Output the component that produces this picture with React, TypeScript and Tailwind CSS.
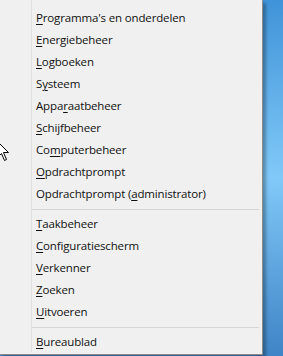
import React from 'react';

type Item = { before: string; key: string; after: string };

const groups: Item[][] = [
  [
    { before: '', key: 'P', after: "rogramma's en onderdelen" },
    { before: '', key: 'E', after: 'nergiebeheer' },
    { before: '', key: 'L', after: 'ogboeken' },
    { before: 'S', key: 'y', after: 'steem' },
    { before: 'Appa', key: 'r', after: 'aatbeheer' },
    { before: '', key: 'S', after: 'chijfbeheer' },
    { before: 'Co', key: 'm', after: 'puterbeheer' },
    { before: '', key: 'O', after: 'pdrachtprompt' },
    { before: 'Opdrachtprompt (', key: 'a', after: 'dministrator)' },
  ],
  [
    { before: '', key: 'T', after: 'aakbeheer' },
    { before: '', key: 'C', after: 'onfiguratiescherm' },
    { before: '', key: 'V', after: 'erkenner' },
    { before: '', key: 'Z', after: 'oeken' },
    { before: '', key: 'U', after: 'itvoeren' },
  ],
  [{ before: '', key: 'B', after: 'ureaublad' }],
];

const MenuItem: React.FC<{ item: Item }> = ({ item }) => (
  <div className="h-[22px] flex items-center pl-[36px] text-[11.5px] tracking-[-0.15px] text-[#111111] leading-none whitespace-nowrap">
    <span>{item.before}</span>
    <span className="underline underline-offset-[2px]">{item.key}</span>
    <span>{item.after}</span>
  </div>
);

const App: React.FC = () => {
  return (
    <div
      className="relative w-[283px] h-[356px] overflow-hidden bg-gradient-to-b from-[#3f93d8] via-[#80c9f8] to-[#3f84c6]"
      style={{ fontFamily: '"Open Sans", "Noto Sans", sans-serif' }}
    >
      {/* desktop streak on the left edge */}
      <div className="absolute left-0 top-[100px] w-[2px] h-[130px] bg-[#7cc2f2]" />

      {/* Win+X menu */}
      <div className="absolute left-0 top-0 w-[263px] h-[355px] bg-[#f0f0f0] border-r border-b border-[#8c8c8c] shadow-[3px_3px_3px_rgba(0,0,0,0.3)]">
        <div className="absolute left-[31px] top-0 bottom-[2px] w-px bg-[#e0e0e0]" />
        <div className="pt-[7px]">
          {groups.map((g, gi) => (
            <div key={gi}>
              {gi > 0 && (
                <div className="h-[8px] flex items-center pl-[32px] pr-[3px]">
                  <div className="h-px w-full bg-[#d5d5d5]" />
                </div>
              )}
              {g.map((item, i) => (
                <MenuItem key={i} item={item} />
              ))}
            </div>
          ))}
        </div>
      </div>

      {/* mouse cursor */}
      <svg className="absolute left-[-3px] top-[141px]" width="13" height="21" viewBox="0 0 13 21">
        <path d="M0.5 0.5 L0.5 16.5 L4.5 12.5 L7.5 19.5 L9.5 18.5 L6.5 11.5 L11.5 11.5 Z" fill="#fff" stroke="#000" strokeWidth="1" />
      </svg>
    </div>
  );
};

export default App;
